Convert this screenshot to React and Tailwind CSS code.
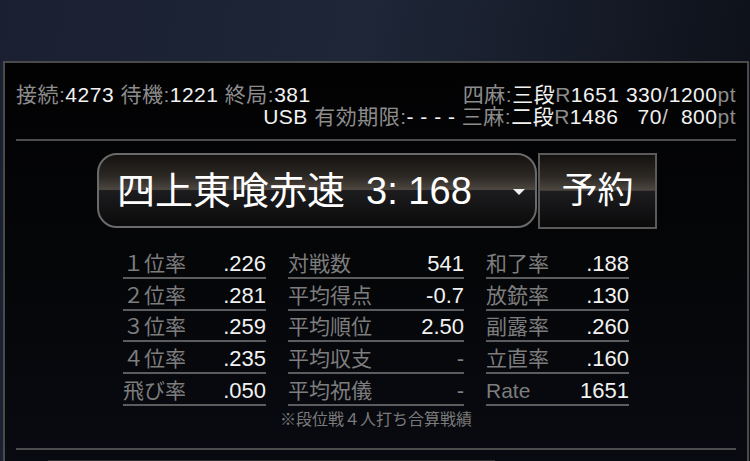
import React from 'react';

const FONT = { fontFamily: '"Liberation Sans", "Noto Sans CJK JP", sans-serif' };

const col1 = [
  ['１位率', '.226'],
  ['２位率', '.281'],
  ['３位率', '.259'],
  ['４位率', '.235'],
  ['飛び率', '.050'],
];

const col2 = [
  ['対戦数', '541'],
  ['平均得点', '-0.7'],
  ['平均順位', '2.50'],
  ['平均収支', '-', true],
  ['平均祝儀', '-', true],
];

const col3 = [
  ['和了率', '.188'],
  ['放銃率', '.130'],
  ['副露率', '.260'],
  ['立直率', '.160'],
  ['Rate', '1651'],
];

function StatColumn({ rows, width }) {
  return (
    <div className={width}>
      {rows.map(([label, value, dim]) => (
        <div
          key={label}
          className="h-[31.75px] flex items-end justify-between border-b-2 border-[#5c5c5c] pb-[1px]"
        >
          <span className="text-[21px] leading-[24px] text-[#7d7d7d]">{label}</span>
          <span className={`text-[22px] leading-[24px] ${dim ? 'text-[#7d7d7d]' : 'text-[#f2f2f2]'}`}>
            {value}
          </span>
        </div>
      ))}
    </div>
  );
}

const G = 'text-[#8c8c8c]';
const W = 'text-[#f2f2f2]';

export default function App() {
  return (
    <div
      className="w-[750px] h-[461px] overflow-hidden relative bg-[linear-gradient(100deg,#1a2031_0%,#1e2637_45%,#141925_75%,#0b0d13_100%)] pt-[61px] pl-[3px]"
      style={FONT}
    >
      <div className="w-[746px] h-[420px] border-2 border-b-0 border-[#4a4a4a] bg-[linear-gradient(to_bottom,#020203_0%,#050608_50%,#090b12_100%)] px-[11px] pt-[21px] relative">
        {/* header */}
        <div className="text-[21px] leading-[22px] tracking-[0.5px] whitespace-pre">
          <div className="flex justify-between">
            <span>
              <span className={G}>接続:</span>
              <span className={W}>4273 </span>
              <span className={G}>待機:</span>
              <span className={W}>1221 </span>
              <span className={G}>終局:</span>
              <span className={W}>381</span>
            </span>
            <span>
              <span className={G}>四麻:</span>
              <span className={W}>三段</span>
              <span className={G}>R</span>
              <span className={W}>1651 330</span>
              <span className="text-[#c4c4c4]">/</span>
              <span className={W}>1200</span>
              <span className={G}>pt</span>
            </span>
          </div>
          <div className="flex justify-end">
            <span>
              <span className={W}>USB </span>
              <span className={G}>有効期限:</span>
              <span className={W}>- - - - </span>
            </span>
            <span>
              <span className={G}>三麻:</span>
              <span className={W}>二段</span>
              <span className={G}>R</span>
              <span className={W}>1486   70</span>
              <span className="text-[#c4c4c4]">/</span>
              <span className={W}>  800</span>
              <span className={G}>pt</span>
            </span>
          </div>
        </div>

        <div className="mt-[11px] h-[2px] bg-[#4c4c4c]" />

        {/* rule select + reserve */}
        <div className="mt-[12px] flex items-start pl-[81px] gap-[1px]">
          <div className="w-[440px] h-[75px] rounded-[20px] border-2 border-[#6a6a6a] bg-[linear-gradient(to_bottom,#141210_0%,#2c2824_30%,#4e4741_49%,#1d1d1f_50%,#0a0a0b_100%)] flex items-center pl-[18px] pr-[10px]">
            <span className="flex-1 text-[38px] leading-[40px] text-white whitespace-pre">
              四上東喰赤速  3: 168
            </span>
            <svg width="12" height="6" viewBox="0 0 12 6" className="mt-[2px]">
              <path d="M0 0 L12 0 L6 6 Z" fill="#f0f0f0" />
            </svg>
          </div>
          <div className="w-[119px] h-[76px] border-2 border-[#5a5a5a] bg-[linear-gradient(to_bottom,#141210_0%,#2c2824_30%,#4e4741_49%,#1d1d1f_50%,#0a0a0b_100%)] flex items-center justify-center">
            <span className="text-[36px] leading-[40px] text-white">予約</span>
          </div>
        </div>

        {/* stats */}
        <div className="mt-[18px] ml-[107px] flex gap-[22px]">
          <StatColumn rows={col1} width="w-[143px]" />
          <StatColumn rows={col2} width="w-[176px]" />
          <StatColumn rows={col3} width="w-[143px]" />
        </div>

        <div className="mt-[6px] text-center text-[16px] leading-[16px] text-[#7a7a7a]">
          ※段位戦４人打ち合算戦績
        </div>

        <div className="mt-[20px] h-[2px] bg-[#4c4c4c]" />

        <div className="mt-[10px] ml-[32px] w-[447px] h-[2px] bg-[#2e2e30]" />
      </div>
    </div>
  );
}
